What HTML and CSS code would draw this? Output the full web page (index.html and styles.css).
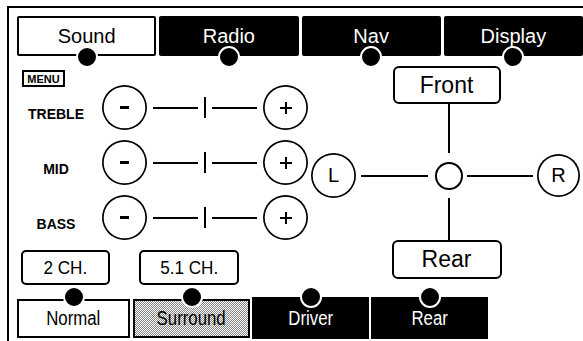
FILE: index.html
```html
<!DOCTYPE html>
<html lang="en">
<head>
    <meta charset="UTF-8">
    <meta name="viewport" content="width=device-width, initial-scale=1.0">
    <title>Sound Settings</title>
    <link rel="stylesheet" href="styles.css">
</head>
<body>
    <div class="frame">
        <nav class="tabs">
            <div class="tab on">Sound<span class="dot"></span></div>
            <div class="tab">Radio<span class="dot"></span></div>
            <div class="tab">Nav<span class="dot"></span></div>
            <div class="tab">Display<span class="dot"></span></div>
        </nav>

        <div class="main">
            <section class="tone">
                <div class="menu">MENU</div>

                <div class="row">
                    <span class="label">TREBLE</span>
                    <span class="knob minus"></span>
                    <span class="line"></span>
                    <span class="tick"></span>
                    <span class="line"></span>
                    <span class="knob plus"></span>
                </div>

                <div class="row">
                    <span class="label">MID</span>
                    <span class="knob minus"></span>
                    <span class="line"></span>
                    <span class="tick"></span>
                    <span class="line"></span>
                    <span class="knob plus"></span>
                </div>

                <div class="row">
                    <span class="label">BASS</span>
                    <span class="knob minus"></span>
                    <span class="line"></span>
                    <span class="tick"></span>
                    <span class="line"></span>
                    <span class="knob plus"></span>
                </div>

                <div class="channels">
                    <div class="btn ch2"><span class="txt">2 CH.</span></div>
                    <div class="btn ch5"><span class="txt">5.1 CH.</span></div>
                </div>
            </section>

            <section class="balance">
                <div class="box front">Front</div>
                <div class="vline up"></div>
                <div class="round left">L</div>
                <div class="hline hl"></div>
                <div class="center"></div>
                <div class="hline hr"></div>
                <div class="round right">R</div>
                <div class="vline down"></div>
                <div class="box rear">Rear</div>
            </section>
        </div>

        <nav class="modes">
            <div class="mtab plain"><span class="txt">Normal</span><span class="dot"></span></div>
            <div class="mtab dotted"><span class="txt">Surround</span><span class="dot"></span></div>
            <div class="mtab"><span class="txt">Driver</span><span class="dot"></span></div>
            <div class="mtab"><span class="txt">Rear</span><span class="dot"></span></div>
        </nav>
    </div>
</body>
</html>
```

FILE: styles.css
```css
body {
    margin: 0;
    font-family: "Liberation Sans", Arial, sans-serif;
    color: #000;
    background-color: #fff;
}

.frame {
    box-sizing: border-box;
    height: 335px;
    margin: 6px 0 0 7px;
    padding: 8px 0 0 8px;
    border-top: 2px solid #000;
    border-left: 2px solid #000;
    overflow: hidden;
}

/* top tabs */
.tabs {
    display: grid;
    grid-template-columns: repeat(4, 1fr);
    gap: 3px;
    height: 40px;
}

.tab {
    position: relative;
    box-sizing: border-box;
    display: flex;
    align-items: center;
    justify-content: center;
    background-color: #000;
    color: #fff;
    font-size: 20px;
    border-radius: 2px;
}

.tab.on {
    background-color: #fff;
    color: #000;
    border: 2px solid #000;
}

.dot {
    position: absolute;
    left: 50%;
    box-sizing: border-box;
    width: 22px;
    height: 22px;
    margin-left: -11px;
    border-radius: 50%;
    background-color: #000;
    border: 2px solid #fff;
}

.tab .dot {
    bottom: -12px;
}

.tab.on .dot {
    bottom: -14px;
}

/* middle area */
.main {
    display: grid;
    grid-template-columns: 294px 1fr;
}

.tone {
    padding-top: 14px;
}

.menu {
    box-sizing: border-box;
    width: 43px;
    height: 17px;
    margin: 0 0 -2px 5px;
    border: 2px solid #000;
    font-size: 11px;
    font-weight: bold;
    display: flex;
    align-items: center;
    justify-content: center;
}

.row {
    display: flex;
    align-items: center;
    height: 45px;
    margin-bottom: 10px;
}

.row:last-of-type {
    margin-bottom: 0;
}

.label {
    width: 78px;
    margin: 12px 7px 0 0;
    text-align: center;
    font-size: 14px;
    font-weight: bold;
}

.knob {
    display: grid;
    place-items: center;
    width: 45px;
    height: 45px;
    border-radius: 50%;
    box-shadow: inset 0 0 0 1.7px #000;
}

.knob::before,
.knob::after {
    content: "";
    grid-area: 1 / 1;
    background-color: #000;
}

.minus::before {
    width: 9px;
    height: 3px;
}

.minus::after {
    display: none;
}

.plus::before {
    width: 12px;
    height: 2px;
}

.plus::after {
    width: 2px;
    height: 12px;
}

.line {
    width: 45px;
    height: 2px;
    margin: 0 6px;
    background-color: #000;
}

.tick {
    width: 2px;
    height: 21px;
    background-color: #000;
}

.channels {
    display: flex;
    margin-top: 7px;
}

.btn {
    box-sizing: border-box;
    height: 35px;
    border: 2px solid #000;
    border-radius: 5px;
    font-size: 19px;
    display: flex;
    align-items: center;
    justify-content: center;
}

.btn .txt {
    display: inline-block;
    transform: scaleX(0.9);
}

.ch2 {
    width: 89px;
    margin-left: 4px;
}

.ch5 {
    width: 100px;
    margin-left: 29px;
}

/* balance / fade */
.balance {
    display: grid;
    grid-template-columns: 45px 79px 28px 74px 43px;
    grid-template-rows: 38px 49px 45px 42px 39px;
    align-content: start;
    padding-top: 10px;
}

.box {
    grid-column: 2 / 5;
    justify-self: center;
    box-sizing: border-box;
    border: 2px solid #000;
    border-radius: 6px;
    font-size: 23px;
    display: flex;
    align-items: center;
    justify-content: center;
}

.front {
    grid-row: 1;
    width: 108px;
}

.rear {
    grid-row: 5;
    width: 110px;
}

.vline {
    grid-column: 3;
    justify-self: center;
    width: 2px;
    background-color: #000;
}

.up {
    grid-row: 2;
}

.down {
    grid-row: 4;
}

.round {
    grid-row: 3;
    align-self: center;
    border-radius: 50%;
    box-shadow: inset 0 0 0 1.7px #000;
    font-size: 20px;
    display: flex;
    align-items: center;
    justify-content: center;
}

.left {
    grid-column: 1;
    width: 45px;
    height: 45px;
}

.right {
    grid-column: 5;
    width: 43px;
    height: 43px;
}

.center {
    grid-row: 3;
    grid-column: 3;
    align-self: center;
    width: 28px;
    height: 28px;
    border-radius: 50%;
    box-shadow: inset 0 0 0 2px #000;
}

.hline {
    grid-row: 3;
    align-self: center;
    height: 2px;
    background-color: #000;
}

.hl {
    grid-column: 2;
    margin: 0 7px 0 5px;
}

.hr {
    grid-column: 4;
    margin: 0 4px;
}

/* bottom mode tabs */
.modes {
    display: flex;
    align-items: flex-end;
    height: 42px;
    margin-top: 12px;
}

.mtab {
    position: relative;
    box-sizing: border-box;
    width: 117px;
    height: 42px;
    margin-right: 2px;
    background-color: #000;
    color: #fff;
    font-size: 20px;
    display: flex;
    align-items: center;
    justify-content: center;
}

.mtab .txt {
    display: inline-block;
    transform: scaleX(0.84);
}

.mtab .dot {
    top: -11px;
}

.mtab.plain,
.mtab.dotted {
    height: 39px;
    margin-bottom: 1px;
    color: #000;
    border: 2px solid #000;
}

.mtab.plain .dot,
.mtab.dotted .dot {
    top: -15px;
}

.mtab.plain {
    width: 113px;
    margin-right: 3px;
    background-color: #fff;
}

.mtab.dotted {
    background: repeating-conic-gradient(#888 0 25%, #fff 0 50%) 0 0 / 2px 2px;
}
```
